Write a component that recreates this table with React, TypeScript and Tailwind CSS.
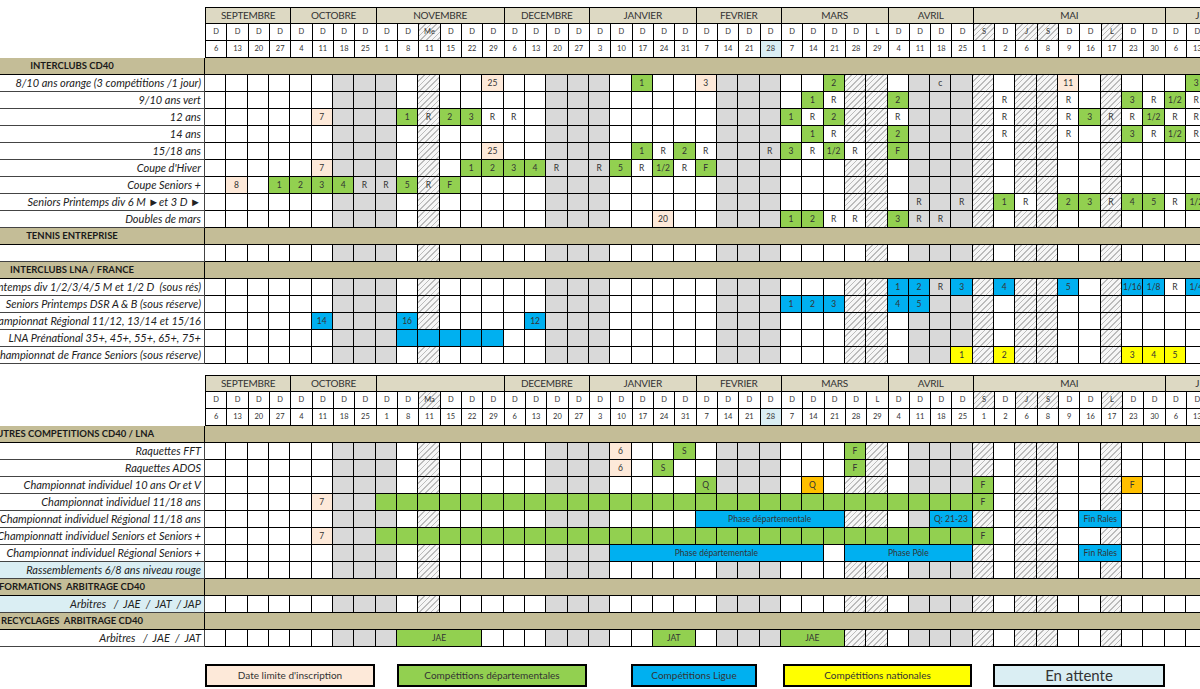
import React from 'react';

type Kind = 'G' | 'B' | 'Y' | 'P' | 'O' | 'W' | 'N';
type Item = [number, string, Kind, number?];

const NC = 48;

const COLS: [string, string][] = [
  ['D', '6'], ['D', '13'], ['D', '20'], ['D', '27'],
  ['D', '4'], ['D', '11'], ['D', '18'], ['D', '25'],
  ['D', '1'], ['D', '8'], ['Me', '11'], ['D', '15'], ['D', '22'], ['D', '29'],
  ['D', '6'], ['D', '13'], ['D', '20'], ['D', '27'],
  ['D', '3'], ['D', '10'], ['D', '17'], ['D', '24'], ['D', '31'],
  ['D', '7'], ['D', '14'], ['D', '21'], ['D', '28'],
  ['D', '7'], ['D', '14'], ['D', '21'], ['D', '28'], ['L', '29'],
  ['D', '4'], ['D', '11'], ['D', '18'], ['D', '25'],
  ['S', '1'], ['D', '2'], ['J', '6'], ['S', '8'], ['D', '9'], ['D', '16'], ['L', '17'], ['D', '23'], ['D', '30'],
  ['D', '6'], ['D', '13'], ['D', '20'],
];

const MONTHS: [string, number][] = [
  ['SEPTEMBRE', 4], ['OCTOBRE', 4], ['NOVEMBRE', 6], ['DECEMBRE', 4], ['JANVIER', 5],
  ['FEVRIER', 4], ['MARS', 5], ['AVRIL', 4], ['MAI', 9], ['J', 3],
];

const GREY = new Set([6, 7, 8, 16, 17, 18, 24, 25, 26, 33, 34, 35]);
const HATCH = new Set([10, 30, 31, 36, 38, 39, 42]);
const HEAD_HATCH = new Set([10, 36, 38, 39, 42]);

const HATCH_CLS = 'bg-[repeating-linear-gradient(135deg,#bcbcbc_0px,#bcbcbc_1px,#f6f6f6_1px,#f6f6f6_4px)]';

const KIND_CLS: Record<Kind, string> = {
  G: 'bg-[#92d050]',
  B: 'bg-[#00b0f0]',
  Y: 'bg-[#ffff00]',
  P: 'bg-[#fde9d9]',
  O: 'bg-[#ffc000]',
  W: 'bg-white',
  N: '',
};

function baseBg(i: number) {
  if (GREY.has(i)) return 'bg-[#d9d9d9]';
  if (HATCH.has(i)) return HATCH_CLS;
  return 'bg-white';
}

const range = (a: number, b: number, kind: Kind): Item[] => {
  const out: Item[] = [];
  for (let i = a; i <= b; i++) out.push([i, '', kind]);
  return out;
};

function MonthRow({ second }: { second?: boolean }) {
  return (
    <div className="flex h-[17px]">
      <div className="w-[205px] shrink-0" />
      <div className="grid grid-cols-[repeat(48,21.33px)] border-l border-t border-black">
        {MONTHS.map(([m, n], idx) => (
          <div
            key={idx}
            className="flex items-center justify-center border-r border-b border-black bg-[#ddd9c3] text-[10px] text-[#333] tracking-tight"
            style={{ gridColumn: `span ${n}` }}
          >
            {second && m === 'NOVEMBRE' ? '' : m}
          </div>
        ))}
      </div>
    </div>
  );
}

function DayRow({ second }: { second?: boolean }) {
  return (
    <div className="flex h-[17px]">
      <div className="w-[205px] shrink-0" />
      <div className="grid grid-cols-[repeat(48,21.33px)] border-l border-black">
        {COLS.map(([d], i) => (
          <div
            key={i}
            className={`flex items-center justify-center border-r border-b border-black text-[7.5px] text-[#333] ${
              HEAD_HATCH.has(i) ? HATCH_CLS : 'bg-white'
            }`}
          >
            {second && i === 10 ? 'Ma' : d}
          </div>
        ))}
      </div>
    </div>
  );
}

function DateRow() {
  return (
    <div className="flex h-[17px]">
      <div className="w-[205px] shrink-0" />
      <div className="grid grid-cols-[repeat(48,21.33px)] border-l border-black">
        {COLS.map(([, n], i) => (
          <div
            key={i}
            className={`flex items-center justify-center border-r border-b border-black text-[7.5px] text-[#333] ${
              i === 26 ? 'bg-[#daeef3]' : 'bg-white'
            }`}
          >
            {n}
          </div>
        ))}
      </div>
    </div>
  );
}

function Header({ second }: { second?: boolean }) {
  return (
    <div>
      <MonthRow second={second} />
      <DayRow second={second} />
      <DateRow />
    </div>
  );
}

function Section({ title }: { title: string }) {
  return (
    <div className="flex h-[17px]">
      <div className="w-[205px] shrink-0 bg-[#c4bd97] border-r border-b border-black flex items-center overflow-hidden">
        <div className="w-[144px] shrink-0 flex justify-center">
          <span className="whitespace-pre shrink-0 font-bold text-[9.5px] text-[#1a1a1a]">{title}</span>
        </div>
      </div>
      <div className="flex-1 bg-[#c4bd97] border-b border-black" />
    </div>
  );
}

function DataRow({ label, items, labelBlue }: { label: string; items: Item[]; labelBlue?: boolean }) {
  const map = new Map<number, Item>();
  items.forEach((it) => map.set(it[0], it));
  const cells: React.ReactNode[] = [];
  for (let i = 0; i < NC; i++) {
    const it = map.get(i);
    const span = it?.[3] ?? 1;
    const kind: Kind = it?.[2] ?? 'N';
    const bg = kind === 'N' ? baseBg(i) : KIND_CLS[kind];
    cells.push(
      <div
        key={i}
        className={`flex items-center justify-center border-r border-b border-black text-[8.5px] text-[#333] whitespace-nowrap overflow-hidden ${bg}`}
        style={span > 1 ? { gridColumn: `span ${span}` } : undefined}
      >
        {it?.[1]}
      </div>
    );
    i += span - 1;
  }
  return (
    <div className="flex h-[17px]">
      <div
        className={`w-[205px] shrink-0 flex items-center justify-end overflow-hidden pr-[3px] border-r border-b border-[#444] ${
          labelBlue ? 'bg-[#daeef3]' : 'bg-white'
        }`}
      >
        <span className="whitespace-pre shrink-0 italic text-[11px] text-[#222]">{label}</span>
      </div>
      <div className="grid grid-cols-[repeat(48,21.33px)]">{cells}</div>
    </div>
  );
}

const BLOCK1: (string | [string, Item[]])[] = [
  'INTERCLUBS CD40',
  ['8/10 ans orange (3 compétitions /1 jour)', [[13, '25', 'P'], [20, '1', 'G'], [23, '3', 'P'], [29, '2', 'G'], [34, 'c', 'N'], [40, '11', 'P'], [46, '3', 'G']]],
  ['9/10 ans vert', [[28, '1', 'G'], [29, 'R', 'N'], [32, '2', 'G'], [37, 'R', 'N'], [40, 'R', 'N'], [43, '3', 'G'], [44, 'R', 'N'], [45, '1/2', 'G'], [46, 'R', 'N']]],
  ['12 ans', [[5, '7', 'P'], [9, '1', 'G'], [10, 'R', 'N'], [11, '2', 'G'], [12, '3', 'G'], [13, 'R', 'N'], [14, 'R', 'N'], [27, '1', 'G'], [28, 'R', 'N'], [29, '2', 'G'], [32, 'R', 'N'], [37, 'R', 'N'], [40, 'R', 'N'], [41, '3', 'G'], [42, 'R', 'N'], [43, 'R', 'N'], [44, '1/2', 'G'], [45, 'R', 'N'], [46, 'R', 'N']]],
  ['14 ans', [[28, '1', 'G'], [29, 'R', 'N'], [32, '2', 'G'], [37, 'R', 'N'], [40, 'R', 'N'], [43, '3', 'G'], [44, 'R', 'N'], [45, '1/2', 'G'], [46, 'R', 'N']]],
  ['15/18 ans', [[13, '25', 'P'], [20, '1', 'G'], [21, 'R', 'N'], [22, '2', 'G'], [23, 'R', 'N'], [26, 'R', 'N'], [27, '3', 'G'], [28, 'R', 'N'], [29, '1/2', 'G'], [30, 'R', 'W'], [32, 'F', 'G']]],
  ["Coupe d'Hiver", [[5, '7', 'P'], [12, '1', 'G'], [13, '2', 'G'], [14, '3', 'G'], [15, '4', 'G'], [16, 'R', 'N'], [18, 'R', 'N'], [19, '5', 'G'], [20, 'R', 'N'], [21, '1/2', 'G'], [22, 'R', 'N'], [23, 'F', 'G']]],
  ['Coupe Seniors +', [[1, '8', 'P'], [3, '1', 'G'], [4, '2', 'G'], [5, '3', 'G'], [6, '4', 'G'], [7, 'R', 'N'], [8, 'R', 'N'], [9, '5', 'G'], [10, 'R', 'N'], [11, 'F', 'G']]],
  ['Seniors Printemps div 6 M ►et 3 D ►', [[33, 'R', 'N'], [35, 'R', 'N'], [37, '1', 'G'], [38, 'R', 'W'], [40, '2', 'G'], [41, '3', 'G'], [42, 'R', 'N'], [43, '4', 'G'], [44, '5', 'G'], [45, 'R', 'N'], [46, '1/2', 'G']]],
  ['Doubles de mars', [[21, '20', 'P'], [27, '1', 'G'], [28, '2', 'G'], [29, 'R', 'N'], [30, 'R', 'W'], [32, '3', 'G'], [33, 'R', 'N'], [34, 'R', 'N']]],
  'TENNIS ENTREPRISE',
  ['', [[30, '', 'W']]],
  'INTERCLUBS LNA / FRANCE',
  ['Seniors Printemps div 1/2/3/4/5 M et 1/2 D  (sous rés)', [[32, '1', 'B'], [33, '2', 'B'], [34, 'R', 'N'], [35, '3', 'B'], [37, '4', 'B'], [40, '5', 'B'], [43, '1/16', 'B'], [44, '1/8', 'B'], [45, 'R', 'W'], [46, '1/4', 'B']]],
  ['Seniors Printemps DSR A & B (sous réserve)', [[27, '1', 'B'], [28, '2', 'B'], [29, '3', 'B'], [32, '4', 'B'], [33, '5', 'B']]],
  ['Championnat Régional 11/12, 13/14 et 15/16', [[5, '14', 'B'], [9, '16', 'B'], [15, '12', 'B']]],
  ['LNA Prénational 35+, 45+, 55+, 65+, 75+', range(9, 13, 'B')],
  ['Championnat de France Seniors (sous réserve)', [[35, '1', 'Y'], [37, '2', 'Y'], [43, '3', 'Y'], [44, '4', 'Y'], [45, '5', 'Y']]],
];

const BLOCK2: (string | [string, Item[], boolean?])[] = [
  'AUTRES COMPETITIONS CD40 / LNA',
  ['Raquettes FFT', [[19, '6', 'P'], [22, 'S', 'G'], [30, 'F', 'G']]],
  ['Raquettes ADOS', [[19, '6', 'P'], [21, 'S', 'G'], [30, 'F', 'G']]],
  ['Championnat individuel 10 ans Or et V', [[23, 'Q', 'G'], [28, 'Q', 'O'], [36, 'F', 'G'], [43, 'F', 'O']]],
  ['Championnat individuel 11/18 ans', [[5, '7', 'P'], ...range(8, 35, 'G'), [36, 'F', 'G']]],
  ['Championnat individuel Régional 11/18 ans', [[23, 'Phase départementale', 'B', 7], [34, 'Q: 21-23', 'B', 2], [41, 'Fin Rales', 'B', 2]]],
  ['Championnatt individuel Seniors et Seniors +', [[5, '7', 'P'], ...range(8, 35, 'G'), [36, 'F', 'G']]],
  ['Championnat individuel Régional Seniors +', [[19, 'Phase départementale', 'B', 10], [29, '', 'W'], [30, 'Phase Pôle', 'B', 6], [41, 'Fin Rales', 'B', 2]]],
  ['Rassemblements 6/8 ans niveau rouge', [], true],
  'FORMATIONS  ARBITRAGE CD40',
  ['Arbitres   /  JAE  /  JAT  / JAP', [], true],
  'RECYCLAGES  ARBITRAGE CD40',
  ['Arbitres   /  JAE  /  JAT', [[9, 'JAE', 'G', 4], [21, 'JAT', 'G', 2], [27, 'JAE', 'G', 3]]],
];

function renderRows(rows: (string | [string, Item[], boolean?])[]) {
  return rows.map((r, i) =>
    typeof r === 'string' ? (
      <Section key={i} title={r} />
    ) : (
      <DataRow key={i} label={r[0]} items={r[1]} labelBlue={r[2]} />
    )
  );
}

function LegendBox({ cls, children }: { cls: string; children: React.ReactNode }) {
  return (
    <div className={`h-[23px] shrink-0 border-2 border-black flex items-center justify-center text-[10px] text-[#333] whitespace-nowrap ${cls}`}>
      {children}
    </div>
  );
}

export default function App() {
  return (
    <div className="w-[1200px] h-[689px] overflow-hidden bg-white pt-[7px] font-['Lato',sans-serif]">
      <Header />
      {renderRows(BLOCK1)}
      <div className="mt-[11px]">
        <Header second />
        {renderRows(BLOCK2)}
      </div>
      <div className="flex mt-[17px]">
        <LegendBox cls="ml-[205px] w-[170px] bg-[#fde9d9]">Date limite d'inscription</LegendBox>
        <LegendBox cls="ml-[22px] w-[190px] bg-[#92d050]">Compétitions départementales</LegendBox>
        <LegendBox cls="ml-[44px] w-[126px] bg-[#00b0f0]">Compétitions Ligue</LegendBox>
        <LegendBox cls="ml-[26px] w-[189px] bg-[#ffff00]">Compétitions nationales</LegendBox>
        <LegendBox cls="ml-[21px] w-[172px] bg-[#daeef3] text-[15px]">En attente</LegendBox>
      </div>
    </div>
  );
}
